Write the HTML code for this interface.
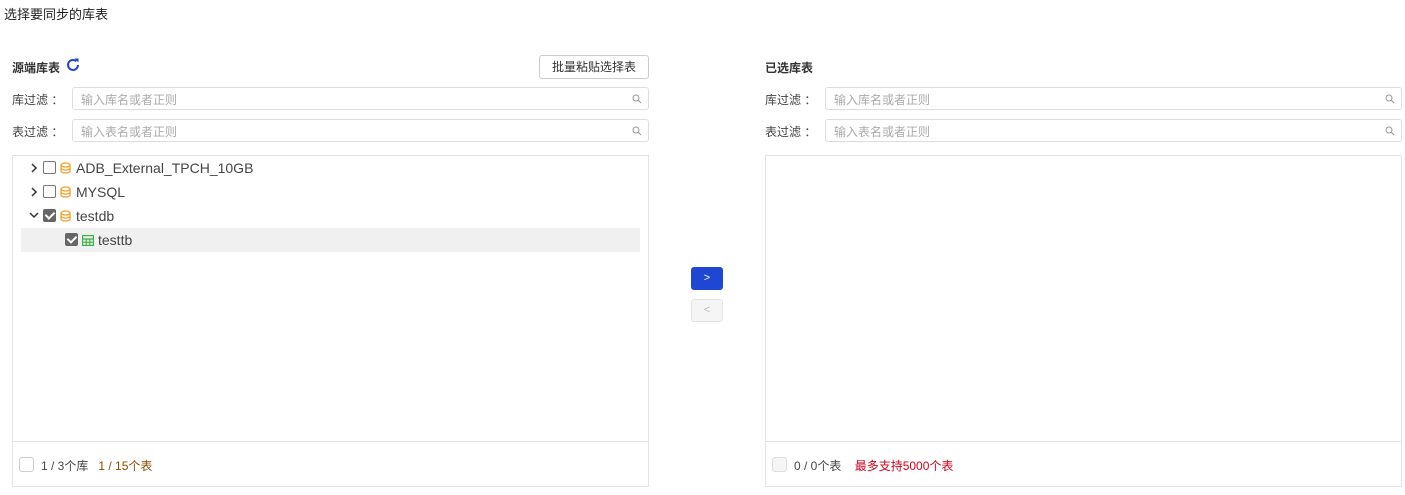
<!DOCTYPE html><html><head><meta charset="utf-8"><style>
*{box-sizing:border-box}body{margin:0;width:1405px;height:495px;background:#fff;font-family:"Liberation Sans","Noto Sans CJK SC",sans-serif;color:#333;font-size:12px;position:relative;overflow:hidden}
.a{position:absolute}
.inp{position:absolute;height:23px;border:1px solid #ddd;border-radius:3px;color:#aaa;padding:2px 8px 0;line-height:21px;font-size:12px}
.inp svg{position:absolute;right:6px;top:6px}
.box{position:absolute;border:1px solid #e3e3e3}
.cb{position:absolute;width:13px;height:13px;border:1px solid #777;border-radius:2px;background:#fff}
.cb.on{background:#666;border-color:#666}
.cb.on:after{content:"";position:absolute;left:3px;top:0px;width:4px;height:7px;border:solid #fff;border-width:0 2px 2px 0;transform:rotate(45deg)}
.t{position:absolute;font-size:14px;color:#444}
</style></head><body>
<div class="a" style="left:4px;top:4px;font-size:13px;color:#222">选择要同步的库表</div>
<div class="a" style="left:12px;top:59px;font-weight:bold;color:#333">源端库表</div>
<svg class="a" style="left:65px;top:57px" width="16" height="16" viewBox="0 0 16 16"><path d="M13 8a5 5 0 1 1-1.6-3.7" fill="none" stroke="#1f47d4" stroke-width="2"/><path d="M9.5 1.5h4v4z" fill="#1f47d4"/></svg>
<div class="a" style="left:539px;top:55px;width:110px;height:24px;border:1px solid #ccc;border-radius:3px;text-align:center;line-height:22px;color:#333">批量粘贴选择表</div>
<div class="a" style="left:12px;top:91px;color:#444">库过滤 ：</div>
<div class="inp" style="left:72px;top:87px;width:577px">输入库名或者正则<svg width="10" height="10"><circle cx="4" cy="4" r="3" fill="none" stroke="#999"/><path d="M6 6l3 3" stroke="#999"/></svg></div>
<div class="a" style="left:12px;top:123px;color:#444">表过滤 ：</div>
<div class="inp" style="left:72px;top:119px;width:577px">输入表名或者正则<svg width="10" height="10"><circle cx="4" cy="4" r="3" fill="none" stroke="#999"/><path d="M6 6l3 3" stroke="#999"/></svg></div>
<div class="box" style="left:12px;top:155px;width:637px;height:332px"></div>
<div class="a" style="left:13px;top:441px;width:635px;border-top:1px solid #e3e3e3"></div>
<div class="a" style="left:21px;top:228px;width:619px;height:24px;background:#f0f0f0"></div>
<svg class="a" style="left:30px;top:163px" width="8" height="10"><path d="M2 1l4 4-4 4" fill="none" stroke="#333" stroke-width="1.5"/></svg>
<svg class="a" style="left:30px;top:187px" width="8" height="10"><path d="M2 1l4 4-4 4" fill="none" stroke="#333" stroke-width="1.5"/></svg>
<svg class="a" style="left:29px;top:211px" width="10" height="8"><path d="M1 2l4 4 4-4" fill="none" stroke="#333" stroke-width="1.5"/></svg>
<div class="cb" style="left:43px;top:161px"></div><div class="cb" style="left:43px;top:185px"></div><div class="cb on" style="left:43px;top:209px"></div><div class="cb on" style="left:65px;top:233px"></div>
<svg class="a" style="left:60px;top:162px" width="11" height="12"><g fill="none" stroke="#f2a12c" stroke-width="1.3"><ellipse cx="5.5" cy="3" rx="4.5" ry="2"/><path d="M1 3v6c0 1.1 2 2 4.5 2s4.5-.9 4.5-2V3M1 6c0 1.1 2 2 4.5 2s4.5-.9 4.5-2"/></g></svg>
<svg class="a" style="left:60px;top:186px" width="11" height="12"><g fill="none" stroke="#f2a12c" stroke-width="1.3"><ellipse cx="5.5" cy="3" rx="4.5" ry="2"/><path d="M1 3v6c0 1.1 2 2 4.5 2s4.5-.9 4.5-2V3M1 6c0 1.1 2 2 4.5 2s4.5-.9 4.5-2"/></g></svg>
<svg class="a" style="left:60px;top:210px" width="11" height="12"><g fill="none" stroke="#f2a12c" stroke-width="1.3"><ellipse cx="5.5" cy="3" rx="4.5" ry="2"/><path d="M1 3v6c0 1.1 2 2 4.5 2s4.5-.9 4.5-2V3M1 6c0 1.1 2 2 4.5 2s4.5-.9 4.5-2"/></g></svg>
<svg class="a" style="left:82px;top:235px" width="12" height="11"><g fill="none" stroke="#3cb043" stroke-width="1.2"><rect x=".6" y=".6" width="10.8" height="9.8"/><path d="M.6 4h10.8M.6 7.2h10.8M4.2 4v6.4M7.8 4v6.4"/></g></svg>
<div class="t" style="left:76px;top:160px">ADB_External_TPCH_10GB</div>
<div class="t" style="left:76px;top:184px">MYSQL</div>
<div class="t" style="left:76px;top:208px">testdb</div>
<div class="t" style="left:98px;top:232px">testtb</div>
<div class="a" style="left:19px;top:457px;width:15px;height:15px;border:1px solid #ccc;border-radius:3px"></div>
<div class="a" style="left:41px;top:457px;color:#444">1 / 3个库 &nbsp;&nbsp;<span style="color:#8a4a00">1 / 15个表</span></div>
<div class="a" style="left:691px;top:267px;width:32px;height:23px;background:#1f47d4;border-radius:3px;color:#fff;text-align:center;line-height:23px;font-size:11px">&gt;</div>
<div class="a" style="left:691px;top:299px;width:32px;height:23px;background:#f5f5f5;border:1px solid #e3e3e3;border-radius:3px;color:#bbb;text-align:center;line-height:21px;font-size:11px">&lt;</div>
<div class="a" style="left:765px;top:59px;font-weight:bold;color:#333">已选库表</div>
<div class="a" style="left:765px;top:91px;color:#444">库过滤 ：</div>
<div class="inp" style="left:825px;top:87px;width:577px">输入库名或者正则<svg width="10" height="10"><circle cx="4" cy="4" r="3" fill="none" stroke="#999"/><path d="M6 6l3 3" stroke="#999"/></svg></div>
<div class="a" style="left:765px;top:123px;color:#444">表过滤 ：</div>
<div class="inp" style="left:825px;top:119px;width:577px">输入表名或者正则<svg width="10" height="10"><circle cx="4" cy="4" r="3" fill="none" stroke="#999"/><path d="M6 6l3 3" stroke="#999"/></svg></div>
<div class="box" style="left:765px;top:155px;width:637px;height:332px"></div>
<div class="a" style="left:766px;top:441px;width:635px;border-top:1px solid #e3e3e3"></div>
<div class="a" style="left:772px;top:457px;width:15px;height:15px;border:1px solid #ddd;border-radius:3px;background:#f5f5f5"></div>
<div class="a" style="left:794px;top:457px;color:#444">0 / 0个表 &nbsp;&nbsp;&nbsp;<span style="color:#d0021b">最多支持5000个表</span></div>
</body></html>
